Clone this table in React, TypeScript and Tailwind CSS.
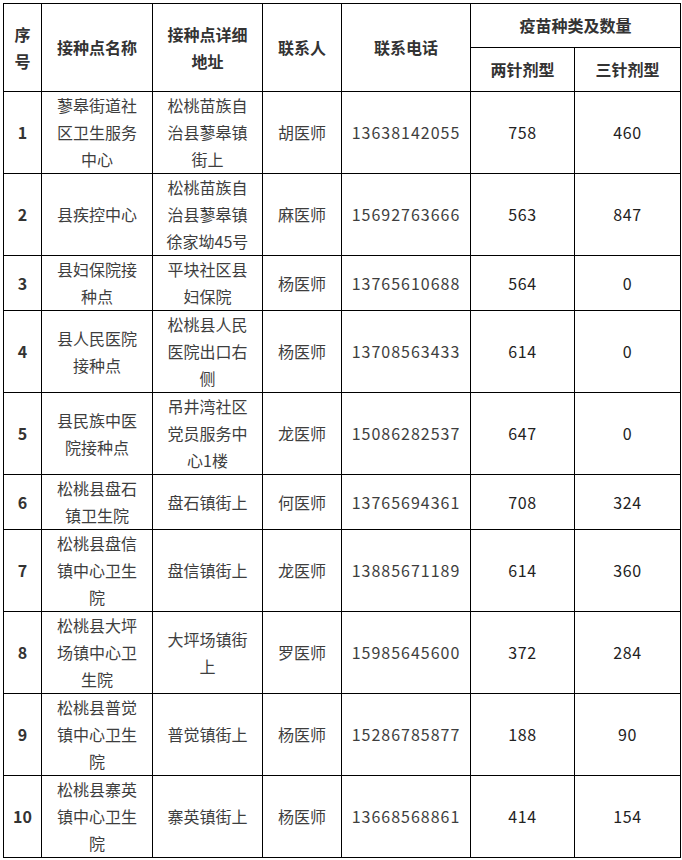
import React from 'react';

type Row = {
  no: string;
  name: string;
  addr: string;
  person: string;
  phone: string;
  two: string;
  three: string;
  tall: boolean;
};

const rows: Row[] = [
  { no: '1', name: '蓼皋街道社区卫生服务中心', addr: '松桃苗族自治县蓼皋镇街上', person: '胡医师', phone: '13638142055', two: '758', three: '460', tall: true },
  { no: '2', name: '县疾控中心', addr: '松桃苗族自治县蓼皋镇徐家坳45号', person: '麻医师', phone: '15692763666', two: '563', three: '847', tall: true },
  { no: '3', name: '县妇保院接种点', addr: '平块社区县妇保院', person: '杨医师', phone: '13765610688', two: '564', three: '0', tall: false },
  { no: '4', name: '县人民医院接种点', addr: '松桃县人民医院出口右侧', person: '杨医师', phone: '13708563433', two: '614', three: '0', tall: true },
  { no: '5', name: '县民族中医院接种点', addr: '吊井湾社区党员服务中心1楼', person: '龙医师', phone: '15086282537', two: '647', three: '0', tall: true },
  { no: '6', name: '松桃县盘石镇卫生院', addr: '盘石镇街上', person: '何医师', phone: '13765694361', two: '708', three: '324', tall: false },
  { no: '7', name: '松桃县盘信镇中心卫生院', addr: '盘信镇街上', person: '龙医师', phone: '13885671189', two: '614', three: '360', tall: true },
  { no: '8', name: '松桃县大坪场镇中心卫生院', addr: '大坪场镇街上', person: '罗医师', phone: '15985645600', two: '372', three: '284', tall: true },
  { no: '9', name: '松桃县普觉镇中心卫生院', addr: '普觉镇街上', person: '杨医师', phone: '15286785877', two: '188', three: '90', tall: true },
  { no: '10', name: '松桃县寨英镇中心卫生院', addr: '寨英镇街上', person: '杨医师', phone: '13668568861', two: '414', three: '154', tall: true },
];

const cell = 'border border-black px-2 text-center align-middle';

export default function App() {
  return (
    <div
      className="min-h-[860px] bg-white pl-[3px] pt-[3px] text-[16px] leading-[27px] text-[#3e3e3e]"
      style={{ fontFamily: '"Noto Sans CJK SC", "Noto Sans", sans-serif' }}
    >
      <table className="table-fixed border-collapse w-[677px]">
        <colgroup>
          <col className="w-[38px]" />
          <col className="w-[111px]" />
          <col className="w-[110px]" />
          <col className="w-[79px]" />
          <col className="w-[129px]" />
          <col className="w-[104px]" />
          <col className="w-[106px]" />
        </colgroup>
        <thead className="font-bold text-[#333]">
          <tr className="h-[44px]">
            <th rowSpan={2} className={`${cell} px-0 font-bold`}>序<br />号</th>
            <th rowSpan={2} className={`${cell} font-bold`}>接种点名称</th>
            <th rowSpan={2} className={`${cell} font-bold`}>接种点详细地址</th>
            <th rowSpan={2} className={`${cell} font-bold`}>联系人</th>
            <th rowSpan={2} className={`${cell} font-bold`}>联系电话</th>
            <th colSpan={2} className={`${cell} font-bold`}>疫苗种类及数量</th>
          </tr>
          <tr className="h-[44px]">
            <th className={`${cell} font-bold`}>两针剂型</th>
            <th className={`${cell} font-bold`}>三针剂型</th>
          </tr>
        </thead>
        <tbody>
          {rows.map(r => (
            <tr key={r.no} className={r.tall ? 'h-[82px]' : 'h-[55px]'}>
              <td className={`${cell} px-0 font-bold text-[#333]`}>{r.no}</td>
              <td className={cell}>{r.name}</td>
              <td className={cell}>{r.addr}</td>
              <td className={cell}>{r.person}</td>
              <td className={`${cell} px-1 tracking-[1px]`}>{r.phone}</td>
              <td className={`${cell} text-[#222] tracking-[0.6px]`}>{r.two}</td>
              <td className={`${cell} text-[#222] tracking-[0.6px]`}>{r.three}</td>
            </tr>
          ))}
        </tbody>
      </table>
    </div>
  );
}
